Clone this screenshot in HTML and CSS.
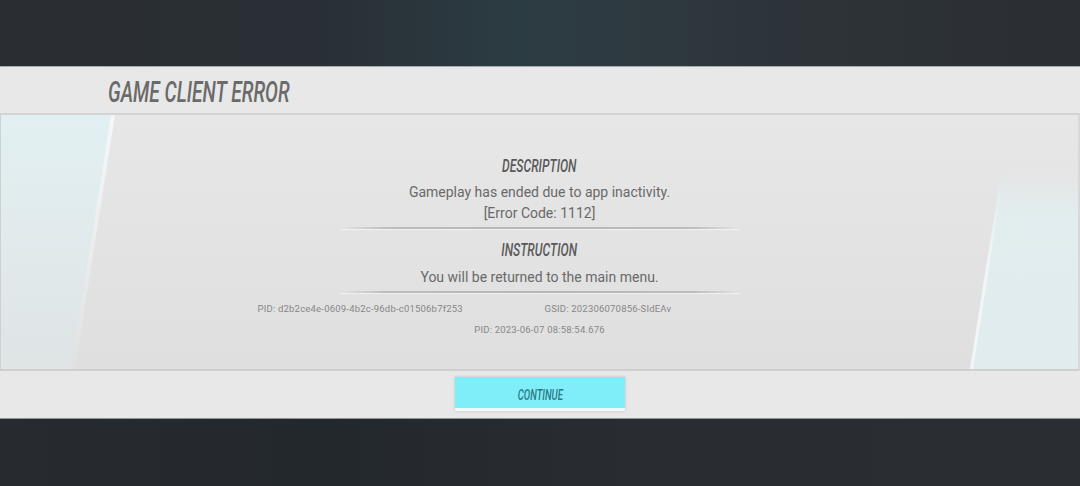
FILE: index.html
```html
<!DOCTYPE html>
<html>
<head>
<meta charset="utf-8">
<link rel="stylesheet" href="styles.css">
</head>
<body>
<div class="screen">
  <div class="backdrop-top"></div>
  <div class="panel">
    <div class="panel-header">
      <h1 class="title"><span class="cond">GAME CLIENT ERROR</span></h1>
    </div>
    <div class="panel-body">
      <div class="deco deco-left"></div>
      <div class="deco deco-left-line"></div>
      <div class="deco deco-right"></div>
      <div class="deco deco-right-line"></div>
      <div class="content">
        <h2 class="section-title"><span class="cond">DESCRIPTION</span></h2>
        <p class="text first">Gameplay has ended due to app inactivity.</p>
        <p class="text">[Error Code: 1112]</p>
        <div class="divider"></div>
        <h2 class="section-title second"><span class="cond">INSTRUCTION</span></h2>
        <p class="text first second-text">You will be returned to the main menu.</p>
        <div class="divider"></div>
        <div class="ids">
          <span class="id-left">PID: d2b2ce4e-0609-4b2c-96db-c01506b7f253</span>
          <span class="id-right">GSID: 202306070856-SIdEAv</span>
        </div>
        <div class="timestamp">PID: 2023-06-07 08:58:54.676</div>
      </div>
    </div>
    <div class="panel-footer">
      <button class="continue"><span class="cond">CONTINUE</span></button>
    </div>
  </div>
  <div class="backdrop-bottom"></div>
</div>
</body>
</html>
```

FILE: styles.css
```css
* { box-sizing: border-box; }
html, body { margin: 0; padding: 0; }
body {
  width: 1080px;
  height: 486px;
  overflow: hidden;
  background: #272b30;
  font-family: Roboto, "Liberation Sans", sans-serif;
}
.screen {
  display: flex;
  flex-direction: column;
  width: 1080px;
  height: 486px;
}
.backdrop-top {
  height: 67px;
  flex: none;
  background: linear-gradient(90deg, #2a2d32 0%, #293035 30%, #2c3c43 48%, #2e3a40 58%, #2d3439 72%, #2b2e32 100%);
  border-bottom: 1px solid #a4abb0;
}
.backdrop-bottom {
  flex: 1;
  background: linear-gradient(90deg, #272b30 0%, #23282d 30%, #292d31 60%, #2a2e32 100%);
  border-top: 1px solid #8e959a;
}
.panel {
  flex: none;
  display: flex;
  flex-direction: column;
}
.cond {
  display: inline-block;
  transform: scaleX(0.64);
  transform-origin: left center;
  font-style: italic;
  font-weight: 500;
  white-space: nowrap;
}
.panel-header {
  height: 48px;
  background: #e8e8e8;
  border-bottom: 2px solid #d3d3d3;
  padding-left: 108px;
  display: flex;
  align-items: center;
}
.title {
  margin: 0;
  font-size: 30px;
  line-height: 30px;
  color: #6a6a6a;
  font-weight: 500;
  padding-top: 3px;
}
.panel-body {
  position: relative;
  height: 256px;
  background: linear-gradient(180deg, #e7e7e7 0%, #e3e3e3 50%, #dfdfdf 100%);
  border-bottom: 2px solid #cfcfcf;
  border-left: 1px solid #d0d0d0;
  border-right: 2px solid #d8d8d8;
  overflow: hidden;
}
.deco {
  position: absolute;
  top: 0;
  height: 100%;
}
.deco-left {
  left: 0;
  width: 112px;
  background: linear-gradient(180deg, #e2f0f3 0%, #e1ebed 40%, #dfe4e5 100%);
  clip-path: polygon(0 0, 110px 0, 70px 100%, 0 100%);
}
.deco-left-line {
  left: 66px;
  width: 50px;
  background: linear-gradient(180deg, rgba(246,250,251,0.9) 0%, rgba(242,247,248,0.5) 50%, rgba(238,242,243,0.1) 100%);
  clip-path: polygon(44px 0, 48px 0, 8px 100%, 4px 100%);
}
.deco-right {
  left: 960px;
  width: 120px;
  background: linear-gradient(180deg, rgba(226,236,238,0) 0%, rgba(226,236,238,0) 22%, rgba(226,238,240,0.9) 40%, #e1ecee 100%);
  clip-path: polygon(50px 0, 120px 0, 120px 100%, 10px 100%);
}
.deco-right-line {
  left: 960px;
  width: 60px;
  background: linear-gradient(180deg, rgba(246,250,251,0) 0%, rgba(246,250,251,0) 25%, rgba(244,249,250,0.8) 60%, rgba(244,249,250,0.9) 100%);
  clip-path: polygon(49px 0, 52px 0, 12px 100%, 9px 100%);
}
.content {
  position: relative;
  z-index: 1;
  display: flex;
  flex-direction: column;
  align-items: center;
  padding-top: 40px;
}
.section-title {
  margin: 0;
  font-size: 19px;
  line-height: 22px;
  color: #595959;
  font-weight: 500;
  width: 100%;
  text-align: center;
}
.section-title .cond {
  transform-origin: center center;
}
.section-title.second { margin-top: 10px; }
.text {
  margin: 0;
  font-size: 14px;
  line-height: 21px;
  color: #696969;
  text-align: center;
}
.text.first { margin-top: 5px; }
.text.second-text { margin-top: 6px; }
.divider {
  width: 400px;
  height: 2px;
  margin-top: 3px;
  background: linear-gradient(90deg, rgba(180,180,180,0) 0%, #bcbcbc 12%, #b6b6b6 50%, #bcbcbc 88%, rgba(180,180,180,0) 100%);
  box-shadow: 0 1px 0 rgba(255,255,255,0.5);
}
.ids {
  margin-top: 9px;
  display: grid;
  grid-template-columns: 282px 282px;
  font-size: 9.5px;
  line-height: 14px;
  color: #878787;
  letter-spacing: 0.2px;
}
.id-right { padding-left: 5px; }
.timestamp {
  margin-top: 7px;
  font-size: 9.5px;
  line-height: 14px;
  color: #878787;
  letter-spacing: 0.2px;
}
.panel-footer {
  height: 47px;
  background: #e8e8e8;
  display: flex;
  justify-content: center;
  padding-top: 6px;
}
.continue {
  width: 170px;
  height: 34px;
  border: none;
  margin: 0;
  padding: 0;
  background: #80eef9;
  border-bottom: 3px solid #eefcfd;
  box-shadow: 0 0 3px rgba(0,0,0,0.18);
  color: #2b7784;
  font-family: Roboto, "Liberation Sans", sans-serif;
  font-size: 15px;
  text-align: center;
}
.continue .cond {
  transform-origin: center center;
  padding-top: 5px;
}
```
